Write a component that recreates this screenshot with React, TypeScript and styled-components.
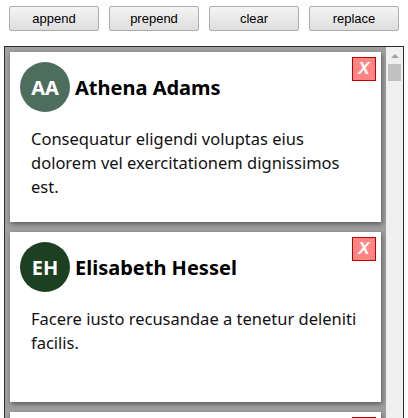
import React, { useState } from "react"
import styled, { createGlobalStyle } from "styled-components"

const GlobalStyle = createGlobalStyle`
  html, body {
    margin: 0;
    padding: 0;
    overflow: hidden;
    background: #ffffff;
  }
`;

const Page = styled.div`
    padding: 6px 4px 0 4px;
    font-family: "Noto Sans", "Liberation Sans", sans-serif;
`;

const Toolbar = styled.div`
    display: flex;
    gap: 10px;
    padding-left: 5px;
    margin-bottom: 15px;
`;

const ToolButton = styled.button`
    width: 90px;
    height: 25px;
    padding: 0;
    font-family: "Liberation Sans", Arial, sans-serif;
    font-size: 13px;
    color: #000;
    background: linear-gradient(#f4f4f4, #dedede);
    border: 1px solid #adadad;
    border-radius: 2px;
    cursor: pointer;
`;

const Feed = styled.div`
    height: 400px;
    border: 1px solid #2b2b2b;
    background: #a0a0a0;
    box-sizing: border-box;
    display: flex;
    overflow: hidden;
`;

const List = styled.div`
    flex: 1;
    overflow: hidden;
    padding: 5px;
    display: flex;
    flex-direction: column;
    gap: 10px;
`;

const ScrollTrack = styled.div`
    flex: 0 0 17px;
    background: #f0f0f0;
    display: flex;
    flex-direction: column;
    align-items: center;
`;

const ScrollArrow = styled.div`
    height: 17px;
    width: 17px;
    display: flex;
    align-items: center;
    justify-content: center;

    &::before {
        content: "";
        border-left: 4px solid transparent;
        border-right: 4px solid transparent;
        border-bottom: 4px solid #a3a3a3;
    }
`;

const ScrollThumb = styled.div`
    width: 13px;
    height: 17px;
    background: #c1c1c1;
`;

const Card = styled.div`
    position: relative;
    flex: 0 0 auto;
    height: 170px;
    box-sizing: border-box;
    padding: 10px;
    background: #ffffff;
    box-shadow: 1px 2px 5px rgba(0, 0, 0, 0.45);
`;

const Header = styled.div`
    display: flex;
    align-items: center;
    gap: 5px;
`;

const Avatar = styled.div<{ $color: string }>`
    width: 50px;
    height: 50px;
    border-radius: 50%;
    background: ${(props) => props.$color};
    color: #ffffff;
    display: flex;
    align-items: center;
    justify-content: center;
    font-size: 20px;
    font-weight: 700;
`;

const Name = styled.h2`
    margin: 0;
    font-size: 20px;
    font-weight: 700;
    color: #000;
`;

const Body = styled.p`
    margin: 15px 11px 0 11px;
    font-size: 16.5px;
    line-height: 24px;
    color: #111;
`;

const CloseButton = styled.button`
    position: absolute;
    top: 5px;
    right: 5px;
    width: 24px;
    height: 24px;
    padding: 0;
    background: #ff8585;
    border: 1px solid #c00000;
    color: #ffffff;
    font-family: "Liberation Sans", Arial, sans-serif;
    font-size: 17px;
    font-weight: 700;
    font-style: italic;
    line-height: 20px;
    cursor: pointer;
`;

type Person = {
    name: string;
    initials: string;
    color: string;
    text: string;
}

const people: Person[] = [
    { name: "Athena Adams", initials: "AA", color: "#4d6e5c", text: "Consequatur eligendi voluptas eius dolorem vel exercitationem dignissimos est." },
    { name: "Elisabeth Hessel", initials: "EH", color: "#1d3f22", text: "Facere iusto recusandae a tenetur deleniti facilis." },
    { name: "Maybelle Kuhn", initials: "MK", color: "#6b4b8a", text: "Quia sed voluptatem ut et aut quasi." },
    { name: "Dario Schmitt", initials: "DS", color: "#8a5a2b", text: "Officiis ipsam autem nihil sint qui natus." },
];

const initial: Person[] = people.slice(0, 3);

export default function App() {
    const [items, setItems] = useState<Person[]>(initial);

    return (
        <Page>
            <GlobalStyle />
            <Toolbar>
                <ToolButton onClick={() => setItems([...items, people[2]])}>append</ToolButton>
                <ToolButton onClick={() => setItems([people[3], ...items])}>prepend</ToolButton>
                <ToolButton onClick={() => setItems([])}>clear</ToolButton>
                <ToolButton onClick={() => setItems(initial)}>replace</ToolButton>
            </Toolbar>
            <Feed>
                <List>
                    {items.map((p, i) => (
                        <Card key={i}>
                            <CloseButton onClick={() => setItems(items.filter((_, j) => j !== i))}>X</CloseButton>
                            <Header>
                                <Avatar $color={p.color}>{p.initials}</Avatar>
                                <Name>{p.name}</Name>
                            </Header>
                            <Body>{p.text}</Body>
                        </Card>
                    ))}
                </List>
                <ScrollTrack>
                    <ScrollArrow />
                    <ScrollThumb />
                </ScrollTrack>
            </Feed>
        </Page>
    )
}
